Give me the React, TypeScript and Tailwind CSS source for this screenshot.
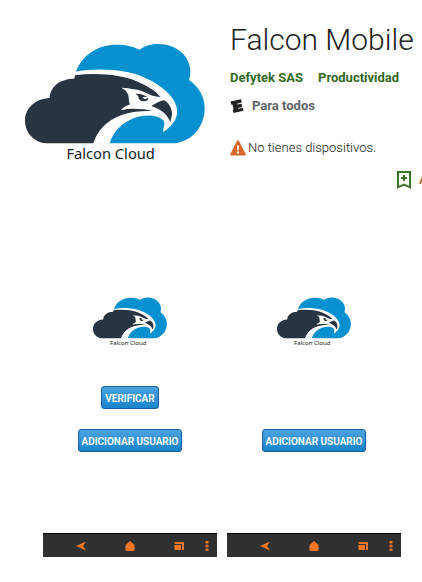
const PHONES = [
  { id: 'verify', actions: ['VERIFICAR', 'ADICIONAR USUARIO'] },
  { id: 'add', actions: ['ADICIONAR USUARIO'] },
];

function FalconLogo({ className }: { className?: string }) {
  return (
    <svg viewBox="30 25 540 360" className={className} role="img" aria-label="Falcon Cloud">
      {/* Blue cloud */}
      <path
        fill="#0590d0"
        d="M182 114C200 60 250 30 305 30C335 30 355 36 374 45C390 33 410 28 430 28C485 28 526 65 526 110C526 120 525 128 522 136C550 155 569 185 569 220C569 280 525 326 470 326H235V150Z"
      />
      {/* White outline of the head */}
      <path
        fill="#fff"
        d="M178 112C250 98 340 104 396 132C430 148 458 168 476 196C496 232 488 264 445 292C442 280 454 268 444 256C425 239 388 240 360 249C320 264 293 292 284 327H220L165 200V120Z"
      />
      {/* Dark cloud and neck */}
      <path
        fill="#283442"
        d="M100 326C60 326 30 296 30 258C30 220 62 192 104 190C106 155 135 132 178 132L180 122C250 113 320 121 368 141C400 155 424 170 437 188C422 194 408 202 396 206C380 212 362 211 345 213C335 215 326 220 318 226C345 220 385 222 412 229C380 228 350 231 322 240C275 256 245 290 235 326Z"
      />
      {/* Brow and eye */}
      <path
        fill="#fff"
        d="M319 159C345 161 372 163 392 174C406 181 418 186 436 187L440 196L410 205C395 214 378 217 360 216C350 221 335 222 318 226C326 217 336 212 345 209C340 200 342 190 340 182C337 171 329 164 319 159Z"
      />
      <path
        fill="#283442"
        d="M362 178C372 176 384 180 396 187L385 187C382 191 387 194 393 192L399 190C401 195 396 200 386 200C375 200 369 192 370 184Z"
      />
      {/* Beak */}
      <path fill="#283442" d="M409 214C425 204 437 198 448 197C463 207 472 222 471 240L466 262C457 239 436 222 409 214Z" />
      <text
        x="287"
        y="373"
        textAnchor="middle"
        fontSize="44"
        fill="#151a20"
        fontFamily="'Noto Sans', 'Open Sans', sans-serif"
      >
        Falcon Cloud
      </text>
    </svg>
  );
}

function WarningIcon() {
  return (
    <svg viewBox="0 0 16 16" className="size-4" aria-hidden="true">
      <path fill="#d9662b" d="M7 1Q8 -.5 9 1L15.700 14Q16 15.500 15 15.500H1Q0 15.500.3 14Z" />
      <path fill="#fff" d="M7 5.500H9L8.700 10.500H7.300ZM7 11.500H9V13.500H7Z" />
    </svg>
  );
}

function RatingIcon() {
  return (
    <svg viewBox="0 0 14 14" className="size-3.5" aria-hidden="true">
      <path
        fill="#222"
        d="M.5 2.500L11 .2L11.800 3.600L7 4.700L7.200 5.600L11.500 4.700L12.200 7.900L8 8.900L8.200 9.700L12.800 8.700L13.600 11.700L3.500 14L2.600 10.800L3.600 10.500L2.500 5.600L1.300 5.800Z"
      />
    </svg>
  );
}

function WishlistIcon() {
  return (
    <svg viewBox="0 0 14 18" className="h-[18px] w-3.5" aria-hidden="true">
      <path fill="none" stroke="#3a7021" strokeWidth="2" d="M1 1H13V16.300L7 13.700L1 16.300Z" />
      <path stroke="#3a7021" strokeWidth="2" d="M7 4V10M4 7H10" />
    </svg>
  );
}

function NavBar() {
  return (
    <nav
      aria-label="Navegación"
      className="grid h-6 grid-cols-[1fr_49px_49px_25px_8px] items-center border-t border-black bg-[#303030] text-[#f57722]"
    >
      <button type="button" aria-label="Atrás" className="justify-self-end">
        <svg viewBox="0 0 10 10" className="size-2.5" fill="currentColor">
          <path d="M0 5L10 .5L7 5L10 9.500Z" />
        </svg>
      </button>
      <button type="button" aria-label="Inicio" className="justify-self-end">
        <svg viewBox="0 0 10 10" className="size-2.5" fill="currentColor">
          <path d="M5 0L9.500 4V9Q9.500 10 8.500 10H1.500Q.5 10 .5 9V4Z" />
        </svg>
      </button>
      <button type="button" aria-label="Recientes" className="justify-self-end">
        <svg viewBox="0 0 10 10" className="size-2.5" fill="currentColor">
          <path d="M.5 1H10V9H8V3H.5Z" />
          <path d="M.5 4H7V9H.5Z" />
        </svg>
      </button>
      <button type="button" aria-label="Más opciones" className="justify-self-end">
        <svg viewBox="0 0 4 10" className="h-2.5 w-1" fill="currentColor">
          <path d="M.5 0H3.500V2.500H.5ZM.5 3.700H3.500V6.200H.5ZM.5 7.400H3.500V9.900H.5Z" />
        </svg>
      </button>
    </nav>
  );
}

function PhoneScreen({ actions }: { actions: string[] }) {
  return (
    <section className="flex min-w-0 flex-1 flex-col">
      <div className="flex flex-1 flex-col items-center">
        <FalconLogo className="w-[74px]" />
        <div className="mt-auto flex flex-col items-center gap-5 pt-10">
          {actions.map((label) => (
            <button
              key={label}
              type="button"
              className="h-[23px] rounded-[3px] border border-[#1c5f9f] bg-linear-to-b from-[#4ba3e0] to-[#1383cc] px-[3px] pt-0.5 text-[10px] leading-5 font-semibold whitespace-nowrap text-white"
            >
              {label}
            </button>
          ))}
        </div>
      </div>
      <div className="mt-[81px]">
        <NavBar />
      </div>
    </section>
  );
}

export default function App() {
  return (
    <main className="overflow-hidden bg-white font-[Roboto,sans-serif] text-[#333]">
      <header className="flex items-start pl-[25px]">
        <FalconLogo className="mt-[43px] w-[180px] shrink-0" />
        <div className="ml-[25px] min-w-0 flex-1 pt-5">
          <h1 className="text-[30px] leading-10 font-light whitespace-nowrap text-[#222]">Falcon Mobile</h1>
          <div className="mt-2 flex gap-[15px] text-[13px] leading-5 font-bold whitespace-nowrap text-[#35691e]">
            <a href="#developer">Defytek SAS</a>
            <a href="#category">Productividad</a>
          </div>
          <div className="mt-2 flex items-center gap-2 text-[13px] leading-5 font-bold text-[#5f6368]">
            <RatingIcon />
            <span>Para todos</span>
          </div>
          <p className="mt-[22px] flex items-center text-[13px] leading-5 font-light whitespace-nowrap text-[#222]">
            <WarningIcon />
            <span className="ml-0.5">No tienes dispositivos.</span>
          </p>
          <button
            type="button"
            className="mt-3 ml-[167px] flex items-center gap-2 text-[13px] leading-5 font-medium text-[#b06a2c]"
          >
            <WishlistIcon />
            <span>A</span>
          </button>
        </div>
      </header>
      <div className="mt-[107px] flex items-stretch gap-2.5 pr-[21px] pb-6 pl-[43px]">
        {PHONES.map((phone) => (
          <PhoneScreen key={phone.id} actions={phone.actions} />
        ))}
      </div>
    </main>
  );
}
